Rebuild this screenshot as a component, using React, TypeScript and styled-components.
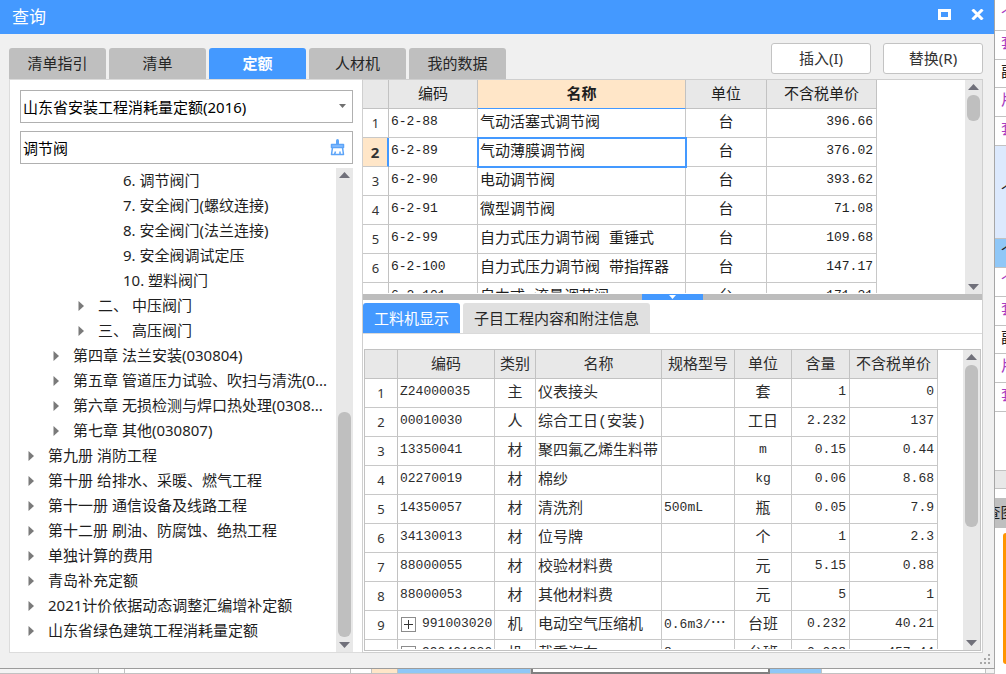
import React, { useState } from "react";
import styled, { createGlobalStyle, css } from "styled-components";

const BLUE = "#4499ff";
const SANS = `"Noto Sans", "Noto Sans CJK SC", sans-serif`;
const GRID = `"Liberation Mono", "Noto Sans CJK SC", monospace`;

const GlobalStyle = createGlobalStyle`
  *, *::before, *::after { box-sizing: border-box; }
  body { margin: 0; font-family: ${SANS}; font-size: 15px; color: #1e1e1e; background: #fff; overflow: hidden; }
  button, input, select { font: inherit; color: inherit; margin: 0; }
`;

const Desktop = styled.div`
  display: grid;
  grid-template-columns: minmax(0, 1fr) 11px;
  grid-template-rows: minmax(0, 1fr) 5px;
  height: 100vh;
`;

/* ---------- dialog frame ---------- */
const Dialog = styled.section`
  display: flex;
  flex-direction: column;
  min-height: 0;
  background: #f0f0f0;
  border-right: 1px solid #a6a6a6;
  border-bottom: 1px solid #9c9c9c;
  position: relative;
`;

const TitleBar = styled.header`
  display: flex;
  align-items: center;
  flex: 0 0 34px;
  padding: 0 8px 0 12px;
  background: ${BLUE};
  color: #fff;
`;

const Title = styled.h1`
  flex: 1;
  margin: 0;
  font-size: 17px;
  font-weight: 400;
  line-height: 34px;
`;

const WindowButton = styled.button`
  display: flex;
  align-items: center;
  justify-content: center;
  width: 17px;
  height: 20px;
  margin-left: 16px;
  margin-bottom: 6px;
  padding: 0;
  border: 0;
  background: none;
  color: #fff;
`;

const Toolbar = styled.div`
  display: flex;
  align-items: flex-end;
  flex: 0 0 45px;
  padding: 0 11px 0 9px;
`;

const Tabs = styled.div`
  display: flex;
  gap: 3px;
`;

const MainTab = styled.button<{ $active?: boolean }>`
  width: 97px;
  height: 31px;
  padding: 0 0 2px;
  border: 0;
  border-radius: 3px 3px 0 0;
  line-height: 28px;
  background: ${(p) => (p.$active ? BLUE : "#bfbfbf")};
  color: ${(p) => (p.$active ? "#fff" : "#262626")};
  font-weight: ${(p) => (p.$active ? 700 : 400)};
`;

const Actions = styled.div`
  display: flex;
  gap: 12px;
  margin-left: auto;
  align-self: flex-start;
  padding-top: 9px;
`;

const ActionButton = styled.button`
  width: 100px;
  height: 31px;
  padding: 0 0 2px;
  border: 1px solid #c3c3c3;
  border-radius: 3px;
  background: #fff;
  line-height: 26px;
  color: #333;
`;

const Body = styled.div`
  display: flex;
  flex: 1;
  min-height: 0;
  padding: 0 11px 15px 9px;
`;

/* ---------- left side ---------- */
const SidePanel = styled.div`
  display: flex;
  flex-direction: column;
  flex: 0 0 353px;
  min-height: 0;
  padding: 10px 9px 0 10px;
  background: #fff;
  border: 1px solid #dcdcdc;
  border-right: 0;
`;

const Field = styled.div`
  position: relative;
  flex: 0 0 33px;
  margin-bottom: 8px;
`;

const fieldBox = css`
  display: block;
  width: 100%;
  height: 33px;
  padding: 0 30px 0 2px;
  border: 1px solid #b0b0b0;
  border-radius: 0;
  background: #fff;
  color: #000;
  outline: 0;
`;

const Library = styled.select`
  ${fieldBox}
  appearance: none;
`;

const DropArrow = styled.svg`
  position: absolute;
  top: 14px;
  right: 7px;
  fill: #707070;
  pointer-events: none;
`;

const Search = styled.input`
  ${fieldBox}
`;

const ClearButton = styled.button`
  position: absolute;
  top: 8px;
  right: 7px;
  display: flex;
  width: 18px;
  height: 18px;
  padding: 0;
  border: 0;
  background: none;
`;

const TreeArea = styled.div`
  display: flex;
  flex: 1;
  min-height: 0;
  margin-top: -4px;
`;

const Tree = styled.ul`
  flex: 1;
  min-width: 0;
  margin: 0;
  padding: 0;
  list-style: none;
  overflow: hidden;
`;

const TreeItem = styled.li<{ $level: number }>`
  display: flex;
  align-items: center;
  height: 25px;
  padding-left: ${(p) => 8 + p.$level * 25}px;
  line-height: 25px;
  white-space: pre;
`;

const Expander = styled.span`
  display: flex;
  flex: 0 0 20px;
`;

/* ---------- scroll bar ---------- */
const Track = styled.div`
  display: flex;
  flex-direction: column;
  align-items: center;
  flex: 0 0 17px;
  padding: 3px 0;
  background: #e8e8e8;
`;

const Rail = styled.div`
  display: flex;
  flex-direction: column;
  align-items: center;
  flex: 1;
  width: 100%;
  padding: 4px 0;
`;

const Spacer = styled.div<{ $grow: number }>`
  flex: ${(p) => p.$grow} 1 0;
`;

const Thumb = styled.div<{ $grow: number }>`
  flex: ${(p) => p.$grow} 1 0;
  width: 13px;
  border-radius: 6px;
  background: #bfbfbf;
`;

const Arrow = styled.svg`
  display: block;
  flex: none;
  width: 11px;
  height: 6px;
  margin: 1px 0;
  fill: #70707a;
`;

/* ---------- right side ---------- */
const MainPanel = styled.div`
  display: flex;
  flex-direction: column;
  flex: 1;
  min-width: 0;
  min-height: 0;
  background: #fff;
  border: 1px solid #cfcfcf;
`;

const GridPane = styled.div`
  display: flex;
  flex: 0 0 214px;
  overflow: hidden;
`;

const TableClip = styled.div`
  flex: 1;
  min-width: 0;
  margin-bottom: 1px;
  overflow: hidden;
`;

const Table = styled.table`
  table-layout: fixed;
  border-spacing: 0;
  font-family: ${GRID};
  font-size: 15px;
  line-height: 20px;
`;

const HeadCell = styled.th<{ $current?: boolean }>`
  height: 29px;
  padding: 4px 0 0;
  border-right: 1px solid #c2c2c2;
  border-bottom: 1px solid ${(p) => (p.$current ? BLUE : "#c2c2c2")};
  background: ${(p) => (p.$current ? "#ffe6c8" : "#e8e8e8")};
  font-weight: ${(p) => (p.$current ? 700 : 400)};
  white-space: nowrap;
`;

type Align = "left" | "center" | "right";

const cellPadding: Record<Align, string> = { left: "0 0 0 2px", center: "0", right: "0 3px 0 0" };

const Cell = styled.td<{ $align: Align; $selected?: boolean; $code?: boolean }>`
  height: 29px;
  padding: ${(p) => cellPadding[p.$align]};
  padding-top: ${(p) => (p.$code ? 0 : 2)}px;
  padding-bottom: ${(p) => (p.$code ? 2 : 0)}px;
  border-right: 1px solid #c8c8c8;
  border-bottom: 1px solid #c8c8c8;
  text-align: ${(p) => p.$align};
  font-size: ${(p) => (p.$code ? 13 : 15)}px;
  white-space: nowrap;
  ${(p) =>
    p.$selected &&
    css`
      outline: 2px solid ${BLUE};
      outline-offset: -1px;
    `}
`;

const RowNumber = styled.th<{ $current?: boolean }>`
  height: 29px;
  padding: 0;
  border-right: ${(p) => (p.$current ? `2px solid ${BLUE}` : "1px solid #c2c2c2")};
  border-bottom: 1px solid #c8c8c8;
  background: ${(p) => (p.$current ? "#ffe6c8" : "#fff")};
  font-family: ${SANS};
  font-size: ${(p) => (p.$current ? 15 : 13)}px;
  font-weight: ${(p) => (p.$current ? 700 : 400)};
  color: #333;
`;

const Expandable = styled.span`
  display: flex;
  align-items: center;
  gap: 6px;
  padding-left: 1px;
`;

const Dots = styled.span`
  font-family: "Noto Sans CJK SC", sans-serif;
  font-size: 15px;
  line-height: 15px;
`;

const Splitter = styled.div`
  display: flex;
  justify-content: center;
  flex: 0 0 6px;
  background: #bdbdbd;
`;

const SplitterHandle = styled.button`
  display: flex;
  justify-content: center;
  width: 61px;
  height: 6px;
  padding: 1px 0 0;
  border: 0;
  background: ${BLUE};
`;

const SubTabs = styled.div`
  display: flex;
  gap: 3px;
  flex: 0 0 34px;
  padding-top: 3px;
  border-bottom: 1px solid #dadada;
`;

const SubTab = styled.button<{ $active?: boolean }>`
  height: 30px;
  padding: 0 11px;
  border: 0;
  border-radius: 3px 3px 0 0;
  line-height: 30px;
  background: ${(p) => (p.$active ? BLUE : "#e0e0e0")};
  color: ${(p) => (p.$active ? "#fff" : "#262626")};
`;

const DetailPane = styled.div`
  display: flex;
  flex: 1;
  min-height: 0;
  margin: 15px 1px 1px 1px;
  border: 1px solid #c2c2c2;
  color: #2c2c2c;
`;

const Grip = styled.svg`
  position: absolute;
  right: 4px;
  bottom: 4px;
  fill: #a8a8a8;
`;

/* ---------- sheet behind the dialog ---------- */
const SheetEdge = styled.aside`
  grid-row: 1 / 3;
  grid-column: 2;
  overflow: hidden;
  background: #fff;
  padding-top: 2px;
`;

const EdgeCell = styled.div<{ $height: number; $bg?: string; $color?: string }>`
  display: flex;
  align-items: center;
  height: ${(p) => p.$height}px;
  padding-left: 6px;
  overflow: hidden;
  border-bottom: 1px solid #c2c2c2;
  background: ${(p) => p.$bg ?? "#fff"};
  color: ${(p) => p.$color ?? "#a83cc0"};
  font-family: ${GRID};
  line-height: 20px;
  white-space: nowrap;
`;

const EdgeTab = styled.div`
  display: flex;
  height: 30px;
  margin-top: 9px;
  padding-bottom: 4px;
  align-items: center;
  justify-content: center;
  background: #bfbfbf;
  white-space: nowrap;
`;

const EdgeCard = styled.div`
  height: 131px;
  margin: 5px 0 0 8px;
  border-radius: 3px 0 0 3px;
  background: #ff9500;
`;

const SheetBottom = styled.div`
  display: flex;
  overflow: hidden;
`;

const Strip = styled.div<{ $width: number; $bg: string }>`
  flex: ${(p) => p.$width} 1 0;
  border-right: 1px solid #c2c2c2;
  border-bottom: 1px solid #c2c2c2;
  background: ${(p) => p.$bg};
`;

const EditorStrip = styled.div`
  flex: 238 1 0;
  border: 2px solid #808080;
  border-top: 0;
  background: #fff;
`;

/* ---------- pieces ---------- */
function ScrollBar({ before, size, after }: { before: number; size: number; after: number }) {
  return (
    <Track aria-hidden="true">
      <Arrow viewBox="0 0 11 6"><path d="M5.500 0L11 6H0z" /></Arrow>
      <Rail>
        <Spacer $grow={before} />
        <Thumb $grow={size} />
        <Spacer $grow={after} />
      </Rail>
      <Arrow viewBox="0 0 11 6"><path d="M0 0H11L5.500 6z" /></Arrow>
    </Track>
  );
}

function TreeBox({ open }: { open?: boolean }) {
  return (
    <svg width="15" height="15" viewBox="0 0 15 15" fill="none" aria-hidden="true">
      <rect x=".5" y=".5" width="14" height="14" stroke="#8c8c8c" />
      <path d={open ? "M3 7.500H12" : "M3 7.500H12M7.500 3V12"} stroke="#333" />
    </svg>
  );
}

const mainTabs = ["清单指引", "清单", "定额", "人材机", "我的数据"];
const subTabs = ["工料机显示", "子目工程内容和附注信息"];

const tree: { level: number; text: string; leaf?: boolean }[] = [
  { level: 3, text: "6. 调节阀门", leaf: true },
  { level: 3, text: "7. 安全阀门(螺纹连接)", leaf: true },
  { level: 3, text: "8. 安全阀门(法兰连接)", leaf: true },
  { level: 3, text: "9. 安全阀调试定压", leaf: true },
  { level: 3, text: "10. 塑料阀门", leaf: true },
  { level: 2, text: "二、 中压阀门" },
  { level: 2, text: "三、 高压阀门" },
  { level: 1, text: "第四章 法兰安装(030804)" },
  { level: 1, text: "第五章 管道压力试验、吹扫与清洗(0..." },
  { level: 1, text: "第六章 无损检测与焊口热处理(0308..." },
  { level: 1, text: "第七章 其他(030807)" },
  { level: 0, text: "第九册 消防工程" },
  { level: 0, text: "第十册 给排水、采暖、燃气工程" },
  { level: 0, text: "第十一册 通信设备及线路工程" },
  { level: 0, text: "第十二册 刷油、防腐蚀、绝热工程" },
  { level: 0, text: "单独计算的费用" },
  { level: 0, text: "青岛补充定额" },
  { level: 0, text: "2021计价依据动态调整汇编增补定额" },
  { level: 0, text: "山东省绿色建筑工程消耗量定额" },
];

const quotaWidths = [26, 89, 208, 81, 110];
const quotas = [
  ["6-2-88", "气动活塞式调节阀", "台", "396.66"],
  ["6-2-89", "气动薄膜调节阀", "台", "376.02"],
  ["6-2-90", "电动调节阀", "台", "393.62"],
  ["6-2-91", "微型调节阀", "台", "71.08"],
  ["6-2-99", "自力式压力调节阀 重锤式", "台", "109.68"],
  ["6-2-100", "自力式压力调节阀 带指挥器", "台", "147.17"],
  ["6-2-101", "自力式 流量调节阀", "台", "171.31"],
];

const detailWidths = [33, 97, 41, 126, 73, 57, 58, 88];
const details = [
  ["Z24000035", "主", "仪表接头", "", "套", "1", "0"],
  ["00010030", "人", "综合工日(安装)", "", "工日", "2.232", "137"],
  ["13350041", "材", "聚四氟乙烯生料带", "", "m", "0.15", "0.44"],
  ["02270019", "材", "棉纱", "", "kg", "0.06", "8.68"],
  ["14350057", "材", "清洗剂", "500mL", "瓶", "0.05", "7.9"],
  ["34130013", "材", "位号牌", "", "个", "1", "2.3"],
  ["88000055", "材", "校验材料费", "", "元", "5.15", "0.88"],
  ["88000053", "材", "其他材料费", "", "元", "5", "1"],
  ["991003020", "机", "电动空气压缩机", "0.6m3/…", "台班", "0.232", "40.21"],
  ["990401030", "机", "载重汽车", "8", "台班", "0.008", "457.44"],
];
const detailAlign: Align[] = ["left", "center", "left", "left", "center", "right", "right"];

function CellText({ value }: { value: string }) {
  return value.endsWith("…") ? (
    <>
      {value.slice(0, -1)}
      <Dots lang="zh-CN">…</Dots>
    </>
  ) : (
    <>{value}</>
  );
}

export default function App() {
  const [query, setQuery] = useState("调节阀");
  const [tab, setTab] = useState(2);
  const [subTab, setSubTab] = useState(0);

  return (
    <Desktop>
      <GlobalStyle />
      <Dialog role="dialog" aria-label="查询">
        <TitleBar>
          <Title>查询</Title>
          <WindowButton aria-label="最大化">
            <svg width="13" height="11" viewBox="0 0 13 11" fill="currentColor" fillRule="evenodd">
              <path d="M0 0H13V11H0zM3 3V8H10V3z" />
            </svg>
          </WindowButton>
          <WindowButton aria-label="关闭">
            <svg width="13" height="11" viewBox="0 0 13 11" stroke="currentColor" strokeWidth="3">
              <path d="M1.500 .5L11.500 10.500M11.500 .5L1.500 10.500" />
            </svg>
          </WindowButton>
        </TitleBar>

        <Toolbar>
          <Tabs role="tablist">
            {mainTabs.map((t, i) => (
              <MainTab key={t} role="tab" aria-selected={i === tab} $active={i === tab} onClick={() => setTab(i)}>
                {t}
              </MainTab>
            ))}
          </Tabs>
          <Actions>
            <ActionButton>插入(I)</ActionButton>
            <ActionButton>替换(R)</ActionButton>
          </Actions>
        </Toolbar>

        <Body>
          <SidePanel>
            <Field>
              <Library aria-label="定额库">
                <option>山东省安装工程消耗量定额(2016)</option>
              </Library>
              <DropArrow width="7" height="4" viewBox="0 0 7 4" aria-hidden="true">
                <path d="M0 0H7L3.500 4z" />
              </DropArrow>
            </Field>
            <Field>
              <Search aria-label="搜索" value={query} onChange={(e) => setQuery(e.target.value)} />
              <ClearButton aria-label="清除" onClick={() => setQuery("")}>
                <svg width="18" height="18" viewBox="0 0 18 18" fill="none" stroke="#5ca4f8" strokeWidth="1.500">
                  <path d="M9.500 1.500V5" strokeWidth="3" strokeLinecap="round" />
                  <path d="M3.500 5.500H15.500V8.500H3.500z" fill="#8abfff" strokeLinejoin="round" />
                  <path d="M4.500 8.500L3.500 15.500H15.500L14.500 8.500M6.500 15.500L7.500 12.500M12 12.500V15.500" strokeLinejoin="round" />
                </svg>
              </ClearButton>
            </Field>
            <TreeArea>
              <Tree role="tree">
                {tree.map((n) => (
                  <TreeItem key={n.text} role="treeitem" $level={n.level}>
                    <Expander>
                      {!n.leaf && (
                        <svg width="6" height="10" viewBox="0 0 6 10" fill="#7a7a7a" aria-hidden="true">
                          <path d="M.5 0L6 5L.5 10z" />
                        </svg>
                      )}
                    </Expander>
                    {n.text}
                  </TreeItem>
                ))}
              </Tree>
              <ScrollBar before={229} size={226} after={0} />
            </TreeArea>
          </SidePanel>

          <MainPanel>
            <GridPane>
              <TableClip>
                <Table style={{ width: quotaWidths.reduce((a, b) => a + b) }}>
                  <colgroup>
                    {quotaWidths.map((w, i) => (
                      <col key={i} style={{ width: w }} />
                    ))}
                  </colgroup>
                  <thead>
                    <tr>
                      {["", "编码", "名称", "单位", "不含税单价"].map((h, i) => (
                        <HeadCell key={i} $current={i === 2}>{h}</HeadCell>
                      ))}
                    </tr>
                  </thead>
                  <tbody>
                    {quotas.map(([code, name, unit, price], i) => (
                      <tr key={code}>
                        <RowNumber scope="row" $current={i === 1}>{i + 1}</RowNumber>
                        <Cell $align="left" $code>{code}</Cell>
                        <Cell $align="left" $selected={i === 1}>{name}</Cell>
                        <Cell $align="center">{unit}</Cell>
                        <Cell $align="right" $code>{price}</Cell>
                      </tr>
                    ))}
                  </tbody>
                </Table>
              </TableClip>
              <ScrollBar before={0} size={25} after={155} />
            </GridPane>

            <Splitter>
              <SplitterHandle aria-label="折叠">
                <svg width="7" height="4" viewBox="0 0 7 4" fill="#fff"><path d="M0 0H7L3.500 4z" /></svg>
              </SplitterHandle>
            </Splitter>

            <SubTabs role="tablist">
              {subTabs.map((t, i) => (
                <SubTab key={t} role="tab" aria-selected={i === subTab} $active={i === subTab} onClick={() => setSubTab(i)}>
                  {t}
                </SubTab>
              ))}
            </SubTabs>

            <DetailPane>
              <TableClip>
                <Table style={{ width: detailWidths.reduce((a, b) => a + b) }}>
                  <colgroup>
                    {detailWidths.map((w, i) => (
                      <col key={i} style={{ width: w }} />
                    ))}
                  </colgroup>
                  <thead>
                    <tr>
                      {["", "编码", "类别", "名称", "规格型号", "单位", "含量", "不含税单价"].map((h, i) => (
                        <HeadCell key={i}>{h}</HeadCell>
                      ))}
                    </tr>
                  </thead>
                  <tbody>
                    {details.map((row, i) => (
                      <tr key={row[0]}>
                        <RowNumber scope="row">{i + 1}</RowNumber>
                        {row.map((v, c) => (
                          <Cell key={c} $align={detailAlign[c]} $code={/^[\x20-\x7e…]+$/.test(v)}>
                            {c === 0 && i > 7 ? (
                              <Expandable><TreeBox open={i === 9} />{v}</Expandable>
                            ) : (
                              <CellText value={v} />
                            )}
                          </Cell>
                        ))}
                      </tr>
                    ))}
                  </tbody>
                </Table>
              </TableClip>
              <ScrollBar before={0} size={157} after={104} />
            </DetailPane>
          </MainPanel>
        </Body>
        <Grip width="10" height="10" viewBox="0 0 10 10" aria-hidden="true">
          <path d="M8 0h2v2h-2zM4 4h2v2h-2zM8 4h2v2h-2zM0 8h2v2h-2zM4 8h2v2h-2zM8 8h2v2h-2z" />
        </Grip>
      </Dialog>

      <SheetEdge aria-hidden="true">
        <EdgeCell $height={29}>个</EdgeCell>
        <EdgeCell $height={29}>套</EdgeCell>
        <EdgeCell $height={28} $color="#222">副</EdgeCell>
        <EdgeCell $height={29}>片</EdgeCell>
        <EdgeCell $height={29}>套</EdgeCell>
        <EdgeCell $height={93} $bg="#dce9fd" $color="#222">个</EdgeCell>
        <EdgeCell $height={29} $bg="#8fc7f7" $color="#222">个</EdgeCell>
        <EdgeCell $height={29}>个</EdgeCell>
        <EdgeCell $height={29}>套</EdgeCell>
        <EdgeCell $height={28} $color="#222">副</EdgeCell>
        <EdgeCell $height={29}>片</EdgeCell>
        <EdgeCell $height={29}>套</EdgeCell>
        <EdgeCell $height={59} />
        <EdgeCell $height={18} $bg="#e8e8e8" />
        <EdgeTab>查图</EdgeTab>
        <EdgeCard />
      </SheetEdge>

      <SheetBottom aria-hidden="true">
        <Strip $width={99} $bg="#f4f4f4" />
        <Strip $width={26} $bg="#fff" />
        <Strip $width={228} $bg="#fff" />
        <Strip $width={20} $bg="#fff" />
        <Strip $width={25} $bg="#ffe6c8" />
        <Strip $width={134} $bg="#8fc7f7" />
        <EditorStrip />
        <Strip $width={52} $bg="#8fc7f7" />
        <Strip $width={165} $bg="#fff" />
        <Strip $width={8} $bg="#f4f4f4" />
      </SheetBottom>
    </Desktop>
  );
}
